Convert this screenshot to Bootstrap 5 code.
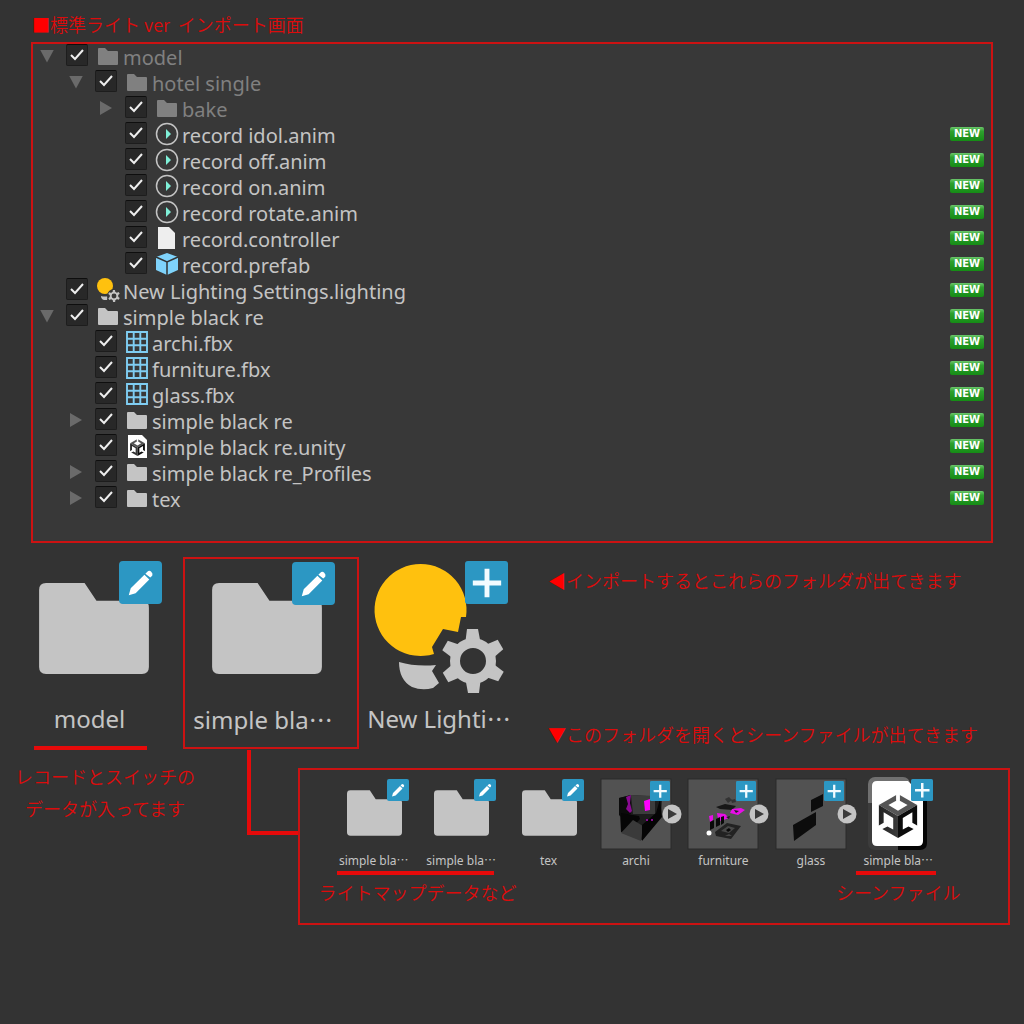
<!DOCTYPE html>
<html lang="ja">
<head>
<meta charset="utf-8">
<meta name="viewport" content="width=device-width, initial-scale=1">
<title>標準ライト ver インポート画面</title>
<link href="https://cdn.jsdelivr.net/npm/bootstrap@5.3.0/dist/css/bootstrap.min.css" rel="stylesheet">
<style>
  :root { --note: #dc0c0c; --ink: #c4c4c4; }
  body { background: #333; color: var(--ink); font-family: "Noto Sans", "Noto Sans CJK JP", sans-serif; }
  .note { color: var(--note); font-family: "Noto Sans CJK JP", sans-serif; font-size: 18px; font-weight: 350; line-height: 32px; margin: 0; }
  .note .sign { color: #f00; }
  .frame { border: 2px solid #cc1212; }
  .bar { height: 4px; background: #e60a0a; }

  .page-title { padding: 8px 0 2px 32px; }
  .tree { background: #383838; margin: 0 31px; padding-bottom: 29px; }
  .tree-row { height: 26px; padding: 0 7px; font-size: 20px; line-height: 27px; }
  .depth-1 { padding-left: 36px; }
  .depth-2 { padding-left: 66px; }
  .twist { width: 14px; height: 24px; margin-right: 12px; padding: 0; border: 0; background: none; display: flex; align-items: center; justify-content: center; }
  .twist::before { content: ""; width: 14px; height: 13px; background: #6a6a6a; clip-path: polygon(0 0, 100% 0, 50% 100%); }
  .twist.shut::before { width: 12px; height: 14px; clip-path: polygon(0 0, 100% 50%, 0 100%); }
  .twist.none { visibility: hidden; }
  .tick { appearance: none; width: 22px; height: 22px; margin: 0 8px 0 0; border: 1px solid #1d1d1d; border-top-color: #0e0e0e; border-radius: 2px;
    background: #282828 url("data:image/svg+xml,%3Csvg xmlns='http://www.w3.org/2000/svg' viewBox='0 0 20 20'%3E%3Cpath d='M4 10l4 4L16 5' fill='none' stroke='%23eee' stroke-width='2'/%3E%3C/svg%3E") center/20px no-repeat; }
  .pic { width: 24px; height: 24px; margin-right: 3px; flex: none; overflow: visible; }
  .dim { color: #808080; }
  .fresh { width: 34px; height: 14px; margin-top: 5px; border-radius: 2px; background: linear-gradient(#6cc76c, #2fa02f 30%, #158c15); color: #fff; font: bold 10px/14px "DejaVu Sans", sans-serif; text-align: center; }

  .results { padding: 15px 0 0 12px; }
  .asset { flex: none; width: 171px; padding: 0 8px 0 0; text-align: center; font-size: 24px; line-height: 34px; }
  .asset.picked { width: 176px; height: 192px; margin: -1px 0; }
  .asset svg { width: 128px; height: 144px; overflow: visible; display: block; margin: 0 auto; }
  .asset .cap { display: block; margin-right: 8px; white-space: nowrap; }
  .asset.last { width: 168px; }
  .asset.last .cap { margin-right: 0; }
  .asset .bar { width: 113px; margin: 10px 0 0 22px; }
  .remarks { padding: 6px 0 0 21px; }

  .below-note { flex: none; width: 210px; padding-top: 10px; text-align: center; }
  .elbow { flex: none; width: 51px; height: 85px; margin-left: 37px; border: solid #e60a0a; border-width: 0 0 4px 4px; }
  .scene { min-width: 0; margin: 18px 14px 0 0; padding: 9px 66px 15px 30px; }
  .thumb { flex: 1 1 0; min-width: 0; text-align: center; font-size: 12px; line-height: 21px; white-space: nowrap; }
  .thumb svg { display: block; width: 86px; height: 71px; margin: 0 auto; overflow: visible; }
  .group-2 { flex: 2 1 0; min-width: 0; }
  .group-4 { flex: 4 1 0; min-width: 0; }
  .group-1 { flex: 1 1 0; min-width: 0; }
  .group-2 .bar { margin: 0 11px 1px 7px; }
  .group-1 .bar { margin: 0 6px 1px 1px; }
  .jp-dots { font-family: "Noto Sans CJK JP", sans-serif; line-height: 1; }
</style>
<script src="https://cdn.jsdelivr.net/npm/bootstrap@5.3.0/dist/js/bootstrap.bundle.min.js"></script>
</head>
<body>

<svg width="0" height="0" class="position-absolute" aria-hidden="true">
  <defs>
    <linearGradient id="cube-left" x2="1"><stop offset="0" stop-color="#222"/><stop offset="1" stop-color="#3c3c3c"/></linearGradient>
    <symbol id="i-folder" viewBox="0 0 24 24"><path d="M2 5Q2 4 3 4H9l3 3H21Q22 7 22 8V20Q22 21 21 21H3Q2 21 2 20z" fill="currentColor"/></symbol>
    <symbol id="i-anim" viewBox="0 0 24 24"><circle cx="12" cy="12" r="10.500" fill="none" stroke="#c4c4c4" stroke-width="1.500"/><path d="M11 7v10l5-5z" fill="#7ff0d8"/></symbol>
    <symbol id="i-file" viewBox="0 0 24 24"><path d="M3 1h11l6 6v16H3z" fill="#eee"/></symbol>
    <symbol id="i-prefab" viewBox="0 0 24 24"><path d="M12 1L23 5V18L12 23 1 18V5z" fill="#7fd3fb"/><path d="M1 5L12 10 23 5M12 10V23" fill="none" stroke="#333" stroke-width="1.500"/></symbol>
    <symbol id="i-mesh" viewBox="0 0 24 24"><path d="M2 2H22V22H2zM8.700 2V22M15.300 2V22M2 8.700H22M2 15.300H22" fill="none" stroke="#7fcdf2" stroke-width="1.900"/></symbol>
    <symbol id="unity" viewBox="0 0 40 46">
      <path d="M20 0L40 11.500 20 23 0 11.500z" fill="#555"/>
      <path d="M0 11.500L20 23V46L0 34.500z" fill="url(#cube-left)"/>
      <path d="M40 11.500L20 23V46L40 34.500z" fill="#0c0c0c"/>
      <path d="M20 6l10 5.500-10 6-10-6zM18 0h4v9h-4z" fill="#fff"/>
      <path id="face-hole" d="M5 19l10 6v12l-6-3-8 4-3-4 7-4z" fill="#fff"/>
      <use href="#face-hole" transform="translate(40 0) scale(-1 1)"/>
    </symbol>
    <symbol id="i-scene" viewBox="0 0 24 24"><path d="M3 1H17l5 5v18H3z" fill="#fff"/><use href="#unity" x="5" y="5" width="15" height="17"/></symbol>
    <symbol id="gear" viewBox="-32 -32 64 64">
      <g fill="#c4c4c4"><path id="tooth" d="M-6-32H5L8-16H-8z"/><use href="#tooth" transform="rotate(60)"/><use href="#tooth" transform="rotate(120)"/><use href="#tooth" transform="rotate(180)"/><use href="#tooth" transform="rotate(240)"/><use href="#tooth" transform="rotate(300)"/></g>
      <circle r="18" fill="none" stroke="#c4c4c4" stroke-width="10"/>
    </symbol>
    <symbol id="bulb" viewBox="0 0 128 132" overflow="visible">
      <path d="M91 53H86L83 68 68 65 57 83 59 90A46 46 0 1 1 91 53z" fill="#ffc10e"/>
      <path d="M24 98Q41 103 61 101l-4 6 7 12-6 5Q47 127 37 123 24 116 24 98z" fill="#c4c4c4"/>
      <use href="#gear" x="66" y="65" width="64" height="64"/>
    </symbol>
    <symbol id="i-light" viewBox="0 0 24 24"><circle cx="9" cy="8" r="8" fill="#ffc10e"/><path d="M5 18q4 1 7 0l-1 4H8Q5 21 5 18z" fill="#c4c4c4"/><circle cx="18" cy="18" r="7" fill="#383838"/><use href="#gear" x="12" y="12" width="12" height="12"/></symbol>
    <symbol id="big-folder" viewBox="0 0 111 92"><path d="M0 7Q0 0 7 0H46L58 18H104Q111 18 111 25V85Q111 92 104 92H7Q0 92 0 85z" fill="#c4c4c4"/></symbol>
    <symbol id="edit" viewBox="0 0 44 44"><rect width="44" height="44" rx="4" fill="#2c97c3"/><path d="M10 35l2-7L26 14l5 5L17 33zM27 13l2-2Q31 9 33 11t1 4l-2 2z" fill="#fff"/></symbol>
    <symbol id="plus" viewBox="0 0 44 44"><rect width="44" height="44" rx="3" fill="#2c97c3"/><path d="M20 8h5v12h12v5H25v12h-5V25H8v-5h12z" fill="#f2fbff"/></symbol>
    <symbol id="play" viewBox="0 0 20 20"><circle cx="10" cy="10" r="9.500" fill="#c4c4c4"/><path d="M6 5v10l9-5z" fill="#3a3a3a"/></symbol>
  </defs>
</svg>

<header class="page-title">
  <h1 class="note"><span class="sign">■</span>標準ライト ver&nbsp; インポート画面</h1>
</header>

<main>
  <section class="tree frame">
    <ul class="list-unstyled mb-0" id="tree"></ul>
  </section>

  <section class="results d-flex">
    <div class="asset">
      <svg viewBox="-9 -25 128 144"><use href="#big-folder" width="110" height="91"/><use href="#edit" x="80" y="-22" width="43" height="43"/></svg>
      <span class="cap">model</span>
      <div class="bar"></div>
    </div>
    <div class="asset picked frame">
      <svg viewBox="-9 -24 128 144"><use href="#big-folder" width="110" height="91"/><use href="#edit" x="80" y="-21" width="43" height="43"/></svg>
      <span class="cap">simple bla<span class="jp-dots">…</span></span>
    </div>
    <div class="asset last">
      <svg viewBox="0 -4 128 144"><use href="#bulb" y="2" width="128" height="132"/><use href="#plus" x="90" y="-1" width="43" height="43"/></svg>
      <span class="cap">New Lighti<span class="jp-dots">…</span></span>
    </div>
    <div class="remarks d-flex flex-column justify-content-between flex-grow-1 text-nowrap">
      <p class="note"><span class="sign">◀</span>インポートするとこれらのフォルダが出てきます</p>
      <p class="note"><span class="sign">▼</span>このフォルダを開くとシーンファイルが出てきます</p>
    </div>
  </section>

  <section class="d-flex align-items-start">
    <p class="note below-note">レコードとスイッチの<br>データが入ってます</p>
    <div class="elbow"></div>
    <div class="scene frame d-flex flex-grow-1">
      <div class="group-2">
        <div class="d-flex">
          <div class="thumb"><svg viewBox="-8 0 86 71"><use href="#big-folder" x="8" y="11" width="55" height="46"/><use href="#edit" x="48" width="22" height="22"/></svg>simple bla<span class="jp-dots">…</span></div>
          <div class="thumb"><svg viewBox="-8 0 86 71"><use href="#big-folder" x="8" y="11" width="55" height="46"/><use href="#edit" x="48" width="22" height="22"/></svg>simple bla<span class="jp-dots">…</span></div>
        </div>
        <div class="bar"></div>
        <p class="note d-flex justify-content-center text-nowrap">ライトマップデータなど</p>
      </div>
      <div class="group-4 d-flex">
        <div class="thumb"><svg viewBox="-8 0 86 71"><use href="#big-folder" x="8" y="11" width="55" height="46"/><use href="#edit" x="48" width="22" height="22"/></svg>tex</div>
        <div class="thumb">
          <svg viewBox="-8 0 86 71"><rect width="70" height="70" fill="#525252" stroke="#2a2a2a"/>
            <path d="M18 19l12-3 31 2-1 20-5 3-14 20-21-8-1-14z" fill="#1c1c1c"/>
            <path d="M18 19l12-3v19l-10 3-2-2z" fill="#0b0b0b"/>
            <path d="M30 16l24 1v18H32z" fill="#3c3c3c"/>
            <path d="M20 34l18 3 1 3-7 8-12 5z" fill="#060606"/>
            <path d="M32 41l10 6-2 15-20-8z" fill="#3a3a3a"/>
            <path d="M41 46l14-12 4-14 2 18-20 24z" fill="#050505"/>
            <path d="M43 22l6-2v11l-5 1z" fill="#f0f"/>
            <path d="M25 18l5-2-1 8 2 8-2 2-4-4 2-5zM45 40h2v2h-2zM50 40h2v2h-2z" fill="#8a0a92"/>
            <use href="#plus" x="49" y="2" width="20" height="20"/><use href="#play" x="61" y="25" width="20" height="20"/></svg>archi</div>
        <div class="thumb">
          <svg viewBox="-8 0 86 71"><rect width="70" height="70" fill="#525252" stroke="#2a2a2a"/>
            <path d="M37 20l4-2 3 3-4 3zM43 21l4-1 1 3-4 1z" fill="#333"/>
            <path d="M28 28l9-3 11 2-4 4-12-1z" fill="#171717"/>
            <path d="M44 30l9-1 4 2-7 5-8-2zM29 34l8 1 4 4-8 3-3-2zM21 37l4-1v5l-3 2z" fill="#e80ee8"/>
            <path d="M46 31l5 1-3 2zM38 38l4-1-1 3z" fill="#222"/>
            <path d="M22 43l4-2v8l-4 2zM28 40l4-2v8l-4 2zM33 38l3-1v7l-3 2z" fill="#0a0a0a"/>
            <path d="M27 53l12-9 14 3-10 13-15-3z" fill="#222"/>
            <path d="M33 52l7-5 7 2-6 5zM37 57l4-2 3 2z" fill="#484848"/><path d="M38 51l3-2 2 2-3 2z" fill="#080808"/>
            <circle cx="21" cy="54" r="2.500" fill="#fff"/>
            <use href="#plus" x="48" y="2" width="20" height="20"/><use href="#play" x="61" y="25" width="20" height="20"/></svg>furniture</div>
        <div class="thumb">
          <svg viewBox="-8 0 86 71"><rect width="70" height="70" fill="#525252" stroke="#2a2a2a"/>
            <path d="M35 21l12-6v12l-12 6zM17 46l23-13v13L18 62z" fill="#0c0c0c"/>
            <use href="#plus" x="48" y="2" width="20" height="20"/><use href="#play" x="61" y="25" width="20" height="20"/></svg>glass</div>
      </div>
      <div class="group-1">
        <div class="thumb">
          <svg viewBox="-8 0 86 71"><rect x="5" y="-2" width="42" height="36" rx="7" fill="#707070"/><path d="M5 24H35V71H12Q5 71 5 64z" fill="#3c3c3c"/><path d="M35 18H64V64Q64 71 57 71H35z" fill="#050505"/>
            <path d="M14 2H45L60 17V62Q60 67 55 67H14Q9 67 9 62V7Q9 2 14 2z" fill="#fff"/><use href="#unity" x="15" y="15" width="40" height="44"/><use href="#plus" x="48" width="22" height="22"/></svg>simple bla<span class="jp-dots">…</span></div>
        <div class="bar"></div>
        <p class="note d-flex justify-content-center text-nowrap">シーンファイル</p>
      </div>
    </div>
  </section>
</main>

<script>
  // [depth, arrow, icon, name, state]
  const rows = [
    [0, "open", "folder", "model", "dim"],
    [1, "open", "folder", "hotel single", "dim"],
    [2, "shut", "folder", "bake", "dim"],
    [2, "none", "anim", "record idol.anim", "new"],
    [2, "none", "anim", "record off.anim", "new"],
    [2, "none", "anim", "record on.anim", "new"],
    [2, "none", "anim", "record rotate.anim", "new"],
    [2, "none", "file", "record.controller", "new"],
    [2, "none", "prefab", "record.prefab", "new"],
    [0, "none", "light", "New Lighting Settings.lighting", "new"],
    [0, "open", "folder", "simple black re", "new"],
    [1, "none", "mesh", "archi.fbx", "new"],
    [1, "none", "mesh", "furniture.fbx", "new"],
    [1, "none", "mesh", "glass.fbx", "new"],
    [1, "shut", "folder", "simple black re", "new"],
    [1, "none", "scene", "simple black re.unity", "new"],
    [1, "shut", "folder", "simple black re_Profiles", "new"],
    [1, "shut", "folder", "tex", "new"]
  ];
  document.getElementById("tree").innerHTML = rows.map(([depth, arrow, icon, name, state], i) => `
    <li class="tree-row depth-${depth} d-flex align-items-start ${state === "dim" ? "dim" : ""}">
      <button type="button" class="twist ${arrow}" aria-label="${name}"></button>
      <input type="checkbox" class="tick" id="row${i}" checked>
      <svg class="pic" aria-hidden="true"><use href="#i-${icon}"/></svg>
      <label for="row${i}">${name}</label>
      ${state === "new" ? '<span class="fresh ms-auto">NEW</span>' : ""}
    </li>`).join("");
</script>
</body>
</html>
